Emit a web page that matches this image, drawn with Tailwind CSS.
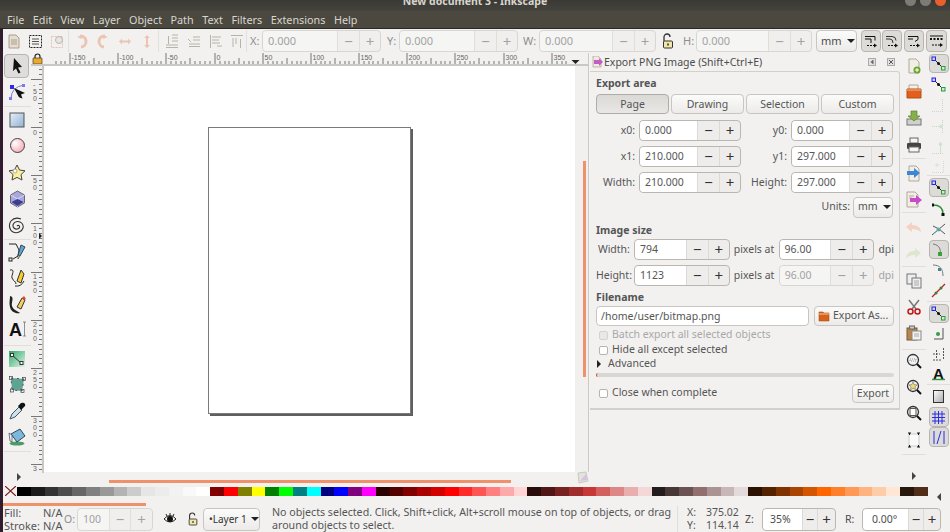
<!DOCTYPE html>
<html>
<head>
<meta charset="utf-8">
<script src="https://cdn.jsdelivr.net/npm/@tailwindcss/browser@4"></script>
<title>New document 3 - Inkscape</title>
</head>
<body class="w-[950px] h-[532px] overflow-hidden flex flex-col bg-[#f2f1f0] font-['Noto_Sans',sans-serif] text-[10.5px] text-[#4c4c4c]">

<!-- title -->
<div class="h-[11px] shrink-0 overflow-hidden bg-gradient-to-b from-[#3a3935] to-[#45433d] relative flex justify-center items-start">
  <span class="text-[#d8d5cd] font-bold text-[10.5px] leading-[14px] -mt-[6px]">New document 3 - Inkscape</span>
  <div class="absolute right-[4px] -top-[5px] flex gap-[4px]">
    <div class="w-[11px] h-[11px] rounded-full bg-[#7e7b74]"></div>
    <div class="w-[11px] h-[11px] rounded-full bg-[#7e7b74]"></div>
    <div class="w-[11px] h-[11px] rounded-full bg-[#e9602c]"></div>
  </div>
</div>
<!-- menu -->
<div class="h-[18px] shrink-0 bg-[#4b4840] border-b border-[#2a2823] flex items-center pl-[7px] gap-[8.5px] text-[#d9d6ce] text-[10.8px] leading-none pt-[2px]">
  <span>File</span><span>Edit</span><span>View</span><span>Layer</span><span>Object</span><span>Path</span><span>Text</span><span>Filters</span><span>Extensions</span><span>Help</span>
</div>

<div class="flex flex-1 min-h-0">
  <div class="w-[3px] bg-[#2f1c2c] shrink-0"></div>
  <div class="flex-1 flex flex-col min-w-0">

    <!-- commands toolbar -->
    <div class="h-[24px] shrink-0 flex items-center">
      <div class="flex items-center w-[243px] shrink-0">
        <svg class="ml-[4px]" width="14" height="15" viewBox="0 0 14 15"><path d="M2 1h7l3 3v10H2z" fill="#e6ddcf" stroke="#a89f90"/><path d="M4 6h6M4 8h6M4 10h6" stroke="#a89f90"/></svg>
        <svg class="ml-[7px]" width="15" height="15" viewBox="0 0 15 15"><rect x="1.500" y="1.500" width="12" height="12" fill="none" stroke="#222" stroke-dasharray="2 1"/><path d="M4 5h7M4 7.500h7M4 10h7" stroke="#555"/></svg>
        <svg class="ml-[7px]" width="15" height="15" viewBox="0 0 15 15"><rect x="1.500" y="2.500" width="11" height="11" fill="none" stroke="#e3c2b4" stroke-dasharray="2 1"/><circle cx="9" cy="6" r="3.500" fill="#e8e6e2" stroke="#b9b6b0"/></svg>
        <div class="w-px h-[22px] bg-[#e2e0dc] ml-[3px]"></div>
        <svg class="ml-[6px]" width="14" height="15" viewBox="0 0 14 15"><path d="M5 2a5.500 5.500 0 1 1 1 11" fill="none" stroke="#ecc5b2" stroke-width="3"/><path d="M2 3l5-2v4z" fill="#ecc5b2"/></svg>
        <svg class="ml-[7px]" width="14" height="15" viewBox="0 0 14 15"><path d="M9 2a5.500 5.500 0 1 0-1 11" fill="none" stroke="#ecc5b2" stroke-width="3"/><path d="M12 3L7 1v4z" fill="#ecc5b2"/></svg>
        <svg class="ml-[8px]" width="14" height="15" viewBox="0 0 14 15"><path d="M1 7.500l3-3v2h6v-2l3 3-3 3v-2H4v2z" fill="#ecc5b2"/></svg>
        <svg class="ml-[8px]" width="14" height="15" viewBox="0 0 14 15"><path d="M7 1l3 3H8v7h2l-3 3-3-3h2V4H4z" fill="#ecc5b2"/></svg>
        <div class="w-px h-[22px] bg-[#e2e0dc] ml-[4px]"></div>
        <svg class="ml-[6px]" width="14" height="15" viewBox="0 0 14 15"><path d="M1 13.500h12M1 11h12M7 1h6M7 4h6M7 7h6M3.500 2v8" stroke="#b7b3a8" fill="none"/></svg>
        <svg class="ml-[8px]" width="14" height="15" viewBox="0 0 14 15"><path d="M2 12.500h11M2 10h11M6 3h7M6 6h7M1 5l3 3" stroke="#b7b3a8" fill="none"/></svg>
        <svg class="ml-[8px]" width="14" height="15" viewBox="0 0 14 15"><path d="M1.500 1v13M3 3h9M3 6h7M3 9h8M8 12h5" stroke="#b7b3a8" fill="none"/></svg>
        <svg class="ml-[7px]" width="14" height="15" viewBox="0 0 14 15"><path d="M1 1.500h12M3 4v9M6 4v6M10.500 5v9" stroke="#b7b3a8" fill="none"/></svg>
      </div>
      <div class="w-px h-[22px] bg-[#e2e0dc]"></div>
      <span class="ml-[3px] w-[12px] text-[#8e8e8e] text-[11px]">X:</span>
      <div class="flex h-[22px] w-[119px] rounded-[4px] border border-[#d8d6d2] bg-[#f0efee] text-[#a3a3a3] text-[11px] leading-[20px]">
        <div class="flex-1 pl-[5px] bg-[#f5f5f4] rounded-l-[4px]">0.000</div>
        <div class="w-[22px] border-l border-[#e0dedb] text-center text-[15px]">−</div>
        <div class="w-[21px] border-l border-[#e0dedb] text-center text-[15px]">+</div>
      </div>
      <span class="ml-[6px] w-[12px] text-[#8e8e8e] text-[11px]">Y:</span>
      <div class="flex h-[22px] w-[119px] rounded-[4px] border border-[#d8d6d2] bg-[#f0efee] text-[#a3a3a3] text-[11px] leading-[20px]">
        <div class="flex-1 pl-[5px] bg-[#f5f5f4] rounded-l-[4px]">0.000</div>
        <div class="w-[22px] border-l border-[#e0dedb] text-center text-[15px]">−</div>
        <div class="w-[21px] border-l border-[#e0dedb] text-center text-[15px]">+</div>
      </div>
      <span class="ml-[5px] w-[16px] text-[#8e8e8e] text-[11px]">W:</span>
      <div class="flex h-[22px] w-[117px] rounded-[4px] border border-[#d8d6d2] bg-[#f0efee] text-[#a3a3a3] text-[11px] leading-[20px]">
        <div class="flex-1 pl-[5px] bg-[#f5f5f4] rounded-l-[4px]">0.000</div>
        <div class="w-[22px] border-l border-[#e0dedb] text-center text-[15px]">−</div>
        <div class="w-[21px] border-l border-[#e0dedb] text-center text-[15px]">+</div>
      </div>
      <svg class="ml-[5px]" width="14" height="16" viewBox="0 0 14 16"><path d="M3 8V4a3 3 0 0 1 6 0" fill="none" stroke="#333" stroke-width="1.300"/><rect x="2.500" y="8" width="9" height="7" rx="1" fill="#f3e7a8" stroke="#333"/><rect x="6" y="10.500" width="2" height="2" fill="#555"/></svg>
      <span class="ml-[8px] w-[13px] text-[#8e8e8e] text-[11px]">H:</span>
      <div class="flex h-[22px] w-[116px] rounded-[4px] border border-[#d8d6d2] bg-[#f0efee] text-[#a3a3a3] text-[11px] leading-[20px]">
        <div class="flex-1 pl-[5px] bg-[#f5f5f4] rounded-l-[4px]">0.000</div>
        <div class="w-[22px] border-l border-[#e0dedb] text-center text-[15px]">−</div>
        <div class="w-[21px] border-l border-[#e0dedb] text-center text-[15px]">+</div>
      </div>
      <div class="ml-[4px] h-[22px] w-[41px] rounded-[4px] border border-[#c9c6c1] bg-gradient-to-b from-[#fbfbfa] to-[#ecebe9] flex items-center pl-[4px] gap-[5px] text-[11px]"><span>mm</span><span class="w-0 h-0 border-x-[4px] border-x-transparent border-t-[4px] border-t-[#222]"></span></div>
      <div class="ml-[4px] w-[20px] h-[22px] rounded-[4px] border border-[#b8b5b0] bg-[#dcdbd8] flex items-center justify-center">
        <svg width="14" height="14" viewBox="0 0 14 14"><path d="M1 2.500h10v4M1 5h6v4" fill="none" stroke="#111" stroke-width="1"/><path d="M3 11.500h8" stroke="#111" stroke-dasharray="2 1"/><path d="M10 9.500l3 2-3 2z" fill="#111"/></svg>
      </div>
      <div class="ml-[1px] w-[20px] h-[22px] rounded-[4px] border border-[#b8b5b0] bg-[#dcdbd8] flex items-center justify-center">
        <svg width="14" height="14" viewBox="0 0 14 14"><path d="M1 2.500h6q4 0 4 4M1 5h4q3 0 3 4" fill="none" stroke="#333"/><path d="M3 11.500h8" stroke="#111" stroke-dasharray="2 1"/><path d="M10 9.500l3 2-3 2z" fill="#111"/></svg>
      </div>
      <div class="ml-[2px] w-[20px] h-[22px] rounded-[4px] border border-[#b8b5b0] bg-[#dcdbd8] flex items-center justify-center">
        <svg width="14" height="14" viewBox="0 0 14 14"><path d="M1 2.500h10v3l-3 2" fill="none" stroke="#111"/><path d="M1 5h5" stroke="#111"/><path d="M3 11.500h8" stroke="#111" stroke-dasharray="2 1"/><path d="M10 9.500l3 2-3 2z" fill="#111"/></svg>
      </div>
      <div class="ml-[2px] w-[21px] h-[22px] rounded-[4px] border border-[#b8b5b0] bg-[#dcdbd8] flex items-center justify-center">
        <svg width="15" height="14" viewBox="0 0 15 14"><path d="M1 2h13" stroke="#111"/><path d="M1 5h13" stroke="#111" stroke-dasharray="2 1.500" stroke-width="2"/><path d="M3 11h8" stroke="#111" stroke-dasharray="2 1"/><path d="M11 9l3 2-3 2z" fill="#111"/></svg>
      </div>
    </div>

    <div class="flex-1 flex min-h-0">
      <!-- left + canvas + panel -->
      <div class="flex-1 flex flex-col min-w-0">
        <div class="flex flex-1 min-h-0">
          <!-- tools -->
          <div class="w-[28px] shrink-0 flex flex-col items-center relative">
            <div class="absolute left-[1px] top-[1px] w-[25px] h-[24px] rounded-[4px] border border-[#b8b5b0] bg-[#dedddb]"></div>
            <svg class="mt-[4px] relative" width="16" height="18" viewBox="0 0 16 18"><path d="M5 1l8 9-4 .5 2.500 5-2 1-2.500-5L4 14z" fill="#111"/></svg>
            <svg class="mt-[7px]" width="20" height="20" viewBox="0 0 20 20"><path d="M4 17Q4 5 17 3" fill="none" stroke="#8080c0"/><rect x="2" y="15" width="3" height="3" fill="#7a7af0"/><rect x="15" y="2" width="3" height="3" fill="#7a7af0"/><rect x="3" y="3" width="4" height="4" fill="#2a2af0"/><path d="M7 6l11 5-4 1.500 1.500 4-3-1-1-1z" fill="#111"/></svg>
            <div class="w-[27px] h-px bg-[#e0dedb] mt-[4px]"></div>
            <svg class="mt-[5px]" width="16" height="16" viewBox="0 0 16 16"><defs><linearGradient id="r1" x1="0" y1="0" x2="1" y2="1"><stop offset="0" stop-color="#e8f0f8"/><stop offset="1" stop-color="#8fb0d4"/></linearGradient></defs><rect x="1" y="1" width="14" height="14" fill="url(#r1)" stroke="#555"/></svg>
            <svg class="mt-[9px]" width="17" height="17" viewBox="0 0 17 17"><defs><radialGradient id="c1" cx=".35" cy=".35" r=".8"><stop offset="0" stop-color="#fff"/><stop offset="1" stop-color="#f5a0aa"/></radialGradient></defs><circle cx="8.500" cy="8.500" r="7" fill="url(#c1)" stroke="#444"/></svg>
            <svg class="mt-[10px]" width="18" height="17" viewBox="0 0 18 17"><path d="M9 1l2.500 5 5.500.8-4 3.800 1 5.400-5-2.600L4 16l1-5.400L1 6.800l5.500-.8z" fill="#fbf0a0" stroke="#444"/><circle cx="7" cy="7" r="2" fill="#fff" stroke="#777" stroke-width=".6"/></svg>
            <svg class="mt-[9px]" width="17" height="18" viewBox="0 0 17 18"><path d="M8.500 1L15.500 5v8l-7 4-7-4V5z" fill="#a8a8dc" stroke="#667"/><path d="M1.500 5l7 4 7-4M8.500 9v8" fill="none" stroke="#dcdcf4"/><path d="M2.500 12l6-3 6 3-6 4z" fill="#3c3c90"/></svg>
            <svg class="mt-[9px]" width="18" height="18" viewBox="0 0 18 18"><path d="M9 9c1.500-1.500 3 0 2.500 1.500S8 13 6 11s-1-6 3-6.500 7 3 6 6.500-6 6-10 4S.5 7 3 4 9 .5 13 2" fill="none" stroke="#333" stroke-width="1.100"/></svg>
            <div class="w-[27px] h-px bg-[#e0dedb] mt-[4px]"></div>
            <svg class="mt-[3px]" width="19" height="19" viewBox="0 0 19 19"><path d="M1 1h7l3 6-1 6-5 3" fill="none" stroke="#222"/><rect x="1" y="15" width="3" height="3" fill="none" stroke="#222"/><path d="M10 12l3-10 4 2-5 9z" fill="#5ea6d6" stroke="#345"/><path d="M10 12l2 1-2 3z" fill="#ece29a" stroke="#333" stroke-width=".6"/></svg>
            <svg class="mt-[6px]" width="19" height="20" viewBox="0 0 19 20"><path d="M2 2c6-1 1 5 2 8s4 3 4 6" fill="none" stroke="#222"/><path d="M9 13l4-11 3 4-3 9z" fill="#f8cc2e" stroke="#333"/><path d="M7 18q6 1 9-5" fill="none" stroke="#222"/></svg>
            <svg class="mt-[7px]" width="19" height="20" viewBox="0 0 19 20"><path d="M2 1c5 1 1 6 2 10s6 5 8 7c-4 1-9-1-10-6S2 5 2 1z" fill="#222"/><path d="M9 12l5-9 3 2-4 9z" fill="#f0d060" stroke="#333"/><path d="M14 3l2-2 2 3-2 1z" fill="#d43"/></svg>
            <svg class="mt-[6px]" width="19" height="18" viewBox="0 0 19 18"><text x="1" y="15" font-family="Liberation Sans" font-weight="700" font-size="18" fill="#111">A</text><path d="M15 1h3M16.500 1v14M15 15h3" stroke="#777" fill="none" stroke-width=".8"/></svg>
            <div class="w-[27px] h-px bg-[#e0dedb] mt-[6px]"></div>
            <svg class="mt-[5px]" width="16" height="16" viewBox="0 0 16 16"><defs><linearGradient id="g1" x1="0" y1="0" x2="1" y2="1"><stop offset="0" stop-color="#2ea86a"/><stop offset="1" stop-color="#e0f4e6"/></linearGradient></defs><rect width="16" height="16" fill="url(#g1)"/><path d="M3 4l9 8" stroke="#333"/><rect x="1.500" y="2.500" width="3" height="3" fill="#fff" stroke="#333"/><rect x="11" y="10.500" width="3" height="3" fill="#fff" stroke="#333"/></svg>
            <svg class="mt-[9px]" width="17" height="17" viewBox="0 0 17 17"><path d="M2 2l13 1-2 12-10-1z" fill="#5fa393"/><path d="M2 2l13 1-2 12-10-1z" fill="none" stroke="#556" stroke-dasharray="2 4"/><rect x="0.500" y="0.500" width="3" height="3" fill="none" stroke="#444" stroke-width=".7"/><rect x="13.500" y="1.500" width="3" height="3" fill="none" stroke="#444" stroke-width=".7"/><rect x="12" y="13.500" width="3" height="3" fill="none" stroke="#444" stroke-width=".7"/><rect x="1.500" y="13" width="3" height="3" fill="none" stroke="#444" stroke-width=".7"/></svg>
            <svg class="mt-[9px]" width="17" height="18" viewBox="0 0 17 18"><path d="M1 17l2-5 7-7 3 3-7 7z" fill="#cfe0ea" stroke="#456"/><path d="M9 4l3-3q3-1 4 1t-1 3l-3 3z" fill="#111"/></svg>
            <svg class="mt-[8px]" width="18" height="18" viewBox="0 0 18 18"><ellipse cx="9" cy="15.500" rx="7.500" ry="2" fill="#4a9a6a"/><path d="M3 6l9-5 5 7-8 6z" fill="#7ab8dc" stroke="#345"/><path d="M1 5l3 2 0 7-2-1z" fill="#f3f3f3" stroke="#345" stroke-width=".7"/></svg>
            <div class="w-[27px] h-px bg-[#e0dedb] mt-[5px]"></div>
          </div>
          <!-- ruler + canvas -->
          <div class="flex-1 flex flex-col min-w-0">
            <div class="h-[13px] shrink-0 flex bg-[#f2f1f0] border-b-[2px] border-[#c9c8c5]">
              <div class="w-[13px] shrink-0 flex items-start pl-[1px]">
                <svg width="11" height="11" viewBox="0 0 11 11"><path d="M3 5V3.500a2.500 2.500 0 0 1 5 0V5" fill="none" stroke="#222" stroke-width="1.200"/><rect x="1" y="5" width="9" height="6" rx=".5" fill="#e8aa2a" stroke="#222" stroke-width=".6"/></svg>
              </div>
              <svg class="flex-1" width="531" height="11" viewBox="44 0 531 11" font-family="Liberation Sans" font-size="7" fill="#666">
                <g stroke="#777" stroke-width="1" fill="none">
                  <path d="M63.500 0v11M111.500 0v11M159.500 0v11M208.500 0v11M256.500 0v11M304.500 0v11M352.500 0v11M400.500 0v11M448.500 0v11M497.500 0v11M545.500 0v11"/>
                  <path d="M87.500 5v6M135.500 5v6M183.500 5v6M232.500 5v6M280.500 5v6M328.500 5v6M376.500 5v6M424.500 5v6M472.500 5v6M521.500 5v6"/>
                  <path d="M49.500 8v3M54.500 8v3M58.500 8v3M68.500 8v3M73.500 8v3M78.500 8v3M82.500 8v3M92.500 8v3M97.500 8v3M102.500 8v3M106.500 8v3M116.500 8v3M121.500 8v3M126.500 8v3M130.500 8v3M140.500 8v3M145.500 8v3M150.500 8v3M154.500 8v3M164.500 8v3M169.500 8v3M174.500 8v3M178.500 8v3M188.500 8v3M193.500 8v3M198.500 8v3M203.500 8v3M213.500 8v3M218.500 8v3M222.500 8v3M227.500 8v3M237.500 8v3M242.500 8v3M246.500 8v3M251.500 8v3M261.500 8v3M266.500 8v3M270.500 8v3M275.500 8v3M285.500 8v3M290.500 8v3M294.500 8v3M299.500 8v3M309.500 8v3M314.500 8v3M318.500 8v3M323.500 8v3M333.500 8v3M338.500 8v3M342.500 8v3M347.500 8v3M357.500 8v3M362.500 8v3M366.500 8v3M371.500 8v3M381.500 8v3M386.500 8v3M390.500 8v3M395.500 8v3M405.500 8v3M410.500 8v3M414.500 8v3M419.500 8v3M429.500 8v3M434.500 8v3M438.500 8v3M443.500 8v3M453.500 8v3M458.500 8v3M463.500 8v3M467.500 8v3M477.500 8v3M482.500 8v3M487.500 8v3M492.500 8v3M502.500 8v3M507.500 8v3M511.500 8v3M516.500 8v3M526.500 8v3M531.500 8v3M535.500 8v3M540.500 8v3M550.500 8v3M555.500 8v3M559.500 8v3"/>
                </g>
                <text x="65" y="7">-150</text><text x="113" y="7">-100</text><text x="161" y="7">-50</text><text x="210" y="7">0</text><text x="258" y="7">50</text><text x="306" y="7">100</text><text x="354" y="7">150</text><text x="402" y="7">200</text><text x="450" y="7">250</text><text x="499" y="7">300</text><text x="547" y="7">350</text>
                <path d="M565 7l4 4 4-4z" fill="#222"/>
              </svg>
            </div>
            <div class="flex-1 flex min-h-0">
              <svg class="shrink-0 bg-[#f2f1f0] border-r-[2px] border-[#c9c8c5]" width="13" height="407" viewBox="0 66 11 407" preserveAspectRatio="none" font-family="Liberation Sans" font-size="7" fill="#666">
                <g stroke="#777" fill="none">
                  <path d="M0 79.500h11M0 127.500h11M0 175.500h11M0 223.500h11M0 272.500h11M0 320.500h11M0 368.500h11M0 416.500h11M0 464.500h11"/>
                  <path d="M7 103.500h4M7 151.500h4M7 199.500h4M7 247.500h4M7 296.500h4M7 344.500h4M7 392.500h4M7 440.500h4"/>
                  <path d="M8 69.500h3M8 74.500h3M8 84.500h3M8 89.500h3M8 93.500h3M8 98.500h3M8 108.500h3M8 113.500h3M8 117.500h3M8 122.500h3M8 132.500h3M8 137.500h3M8 142.500h3M8 146.500h3M8 156.500h3M8 161.500h3M8 166.500h3M8 170.500h3M8 180.500h3M8 185.500h3M8 190.500h3M8 194.500h3M8 204.500h3M8 209.500h3M8 214.500h3M8 218.500h3M8 228.500h3M8 233.500h3M8 238.500h3M8 242.500h3M8 252.500h3M8 257.500h3M8 262.500h3M8 267.500h3M8 277.500h3M8 282.500h3M8 286.500h3M8 291.500h3M8 301.500h3M8 306.500h3M8 310.500h3M8 315.500h3M8 325.500h3M8 330.500h3M8 334.500h3M8 339.500h3M8 349.500h3M8 354.500h3M8 358.500h3M8 363.500h3M8 373.500h3M8 378.500h3M8 382.500h3M8 387.500h3M8 397.500h3M8 402.500h3M8 406.500h3M8 411.500h3M8 421.500h3M8 426.500h3M8 430.500h3M8 435.500h3M8 445.500h3M8 450.500h3M8 454.500h3M8 459.500h3M8 469.500h3"/>
                </g>
                <text x="2" y="87">-</text><text x="2" y="94">5</text><text x="2" y="101">0</text>
                <text x="2" y="135">0</text>
                <text x="2" y="183">5</text><text x="2" y="190">0</text>
                <text x="2" y="231">1</text><text x="2" y="238">0</text><text x="2" y="245">0</text>
                <text x="2" y="279">1</text><text x="2" y="286">5</text><text x="2" y="293">0</text>
                <text x="2" y="327">2</text><text x="2" y="334">0</text><text x="2" y="341">0</text>
                <text x="2" y="375">2</text><text x="2" y="382">5</text><text x="2" y="389">0</text>
                <text x="2" y="423">3</text><text x="2" y="430">0</text><text x="2" y="437">0</text>
                <text x="2" y="471">3</text>
                <path d="M8 233l3 3-3 3z" fill="#222"/>
              </svg>
              <div class="flex-1 relative bg-white">
                <div class="absolute left-[164px] top-[61px] w-[203px] h-[287px] border border-[#7a7a7a] bg-white shadow-[2px_2px_0_#5f5f5f]"></div>
              </div>
              <div class="w-[13px] shrink-0 bg-[#f1f0ee] relative">
                <div class="absolute left-[8px] top-[95px] w-[3px] h-[216px] bg-[#ef926c]"></div>
              </div>
            </div>
          </div>
          <div class="w-px bg-[#c9c8c5]"></div>
          <div class="w-px bg-[#f6f5f4]"></div>

          <!-- export panel -->
          <div class="w-[310px] shrink-0 flex flex-col">
            <div class="h-[18px] shrink-0 flex items-center pl-[2px] pr-[5px]">
              <svg width="11" height="12" viewBox="0 0 11 12"><path d="M1 0h5l3 3v8H1z" fill="#efe8dc" stroke="#a79f90" stroke-width=".7"/><path d="M2 4h5v-2l4 4-4 4V8H2z" fill="#c45cc8"/></svg>
              <span class="ml-[1px] leading-none whitespace-nowrap">Export PNG Image (Shift+Ctrl+E)</span>
              <svg class="ml-auto" width="8" height="8" viewBox="0 0 8 8"><rect x=".5" y=".5" width="7" height="7" fill="#e4e3e0" stroke="#aaa"/><path d="M5.500 1.500v5l-3-2.500z" fill="#666"/></svg>
              <svg class="ml-[11px]" width="8" height="8" viewBox="0 0 8 8"><rect x=".5" y=".5" width="7" height="7" fill="#e4e3e0" stroke="#aaa"/><path d="M2 2l4 4M6 2L2 6" stroke="#555"/></svg>
            </div>
            <div class="h-[339px] w-[310px] shrink-0 border-r border-b-2 border-t border-[#d2d0cc] rounded-tr-[3px] pl-[6px] pr-[5px] text-[#555]">
              <div class="font-bold leading-[14px] pt-[4px] h-[22px]">Export area</div>
              <div class="flex gap-[2px] h-[20px]">
                <div class="w-[73px] rounded-[4px] border border-[#b0ada8] bg-gradient-to-b from-[#dad9d6] to-[#e8e7e5] text-center leading-[18px]">Page</div>
                <div class="w-[73px] rounded-[4px] border border-[#c9c6c1] bg-gradient-to-b from-[#fbfbfa] to-[#ecebe9] text-center leading-[18px]">Drawing</div>
                <div class="w-[73px] rounded-[4px] border border-[#c9c6c1] bg-gradient-to-b from-[#fbfbfa] to-[#ecebe9] text-center leading-[18px]">Selection</div>
                <div class="w-[73px] rounded-[4px] border border-[#c9c6c1] bg-gradient-to-b from-[#fbfbfa] to-[#ecebe9] text-center leading-[18px]">Custom</div>
              </div>

              <div class="grid grid-cols-[39px_102px_42px_102px] gap-x-[4px] gap-y-[5px] mt-[6px] items-center">
                <span class="text-right">x0:</span>
                <div class="flex h-[21px] rounded-[4px] border border-[#bab7b1] bg-[#eeedeb] leading-[19px]"><div class="flex-1 pl-[5px] bg-white rounded-l-[4px]">0.000</div><div class="w-[22px] border-l border-[#dcdad7] text-center text-[15px] text-[#333]">−</div><div class="w-[21px] border-l border-[#dcdad7] text-center text-[15px] text-[#333]">+</div></div>
                <span class="text-right">y0:</span>
                <div class="flex h-[21px] rounded-[4px] border border-[#bab7b1] bg-[#eeedeb] leading-[19px]"><div class="flex-1 pl-[5px] bg-white rounded-l-[4px]">0.000</div><div class="w-[22px] border-l border-[#dcdad7] text-center text-[15px] text-[#333]">−</div><div class="w-[21px] border-l border-[#dcdad7] text-center text-[15px] text-[#333]">+</div></div>
                <span class="text-right">x1:</span>
                <div class="flex h-[21px] rounded-[4px] border border-[#bab7b1] bg-[#eeedeb] leading-[19px]"><div class="flex-1 pl-[5px] bg-white rounded-l-[4px]">210.000</div><div class="w-[22px] border-l border-[#dcdad7] text-center text-[15px] text-[#333]">−</div><div class="w-[21px] border-l border-[#dcdad7] text-center text-[15px] text-[#333]">+</div></div>
                <span class="text-right">y1:</span>
                <div class="flex h-[21px] rounded-[4px] border border-[#bab7b1] bg-[#eeedeb] leading-[19px]"><div class="flex-1 pl-[5px] bg-white rounded-l-[4px]">297.000</div><div class="w-[22px] border-l border-[#dcdad7] text-center text-[15px] text-[#333]">−</div><div class="w-[21px] border-l border-[#dcdad7] text-center text-[15px] text-[#333]">+</div></div>
                <span class="text-right">Width:</span>
                <div class="flex h-[21px] rounded-[4px] border border-[#bab7b1] bg-[#eeedeb] leading-[19px]"><div class="flex-1 pl-[5px] bg-white rounded-l-[4px]">210.000</div><div class="w-[22px] border-l border-[#dcdad7] text-center text-[15px] text-[#333]">−</div><div class="w-[21px] border-l border-[#dcdad7] text-center text-[15px] text-[#333]">+</div></div>
                <span class="text-right">Height:</span>
                <div class="flex h-[21px] rounded-[4px] border border-[#bab7b1] bg-[#eeedeb] leading-[19px]"><div class="flex-1 pl-[5px] bg-white rounded-l-[4px]">297.000</div><div class="w-[22px] border-l border-[#dcdad7] text-center text-[15px] text-[#333]">−</div><div class="w-[21px] border-l border-[#dcdad7] text-center text-[15px] text-[#333]">+</div></div>
              </div>

              <div class="flex items-center justify-end gap-[3px] mt-[3px] h-[22px] pr-[1px]">
                <span>Units:</span>
                <div class="h-[21px] w-[40px] rounded-[4px] border border-[#c9c6c1] bg-gradient-to-b from-[#fbfbfa] to-[#ecebe9] flex items-center pl-[4px] gap-[5px]"><span>mm</span><span class="w-0 h-0 border-x-[4px] border-x-transparent border-t-[4px] border-t-[#222]"></span></div>
              </div>

              <div class="font-bold leading-[14px] mt-[5px] h-[14px]">Image size</div>
              <div class="flex items-center h-[21px] mt-[2px]">
                <span class="w-[34px] text-right">Width:</span>
                <div class="ml-[4px] flex h-[21px] w-[96px] rounded-[4px] border border-[#bab7b1] bg-[#eeedeb] leading-[19px]"><div class="flex-1 pl-[5px] bg-white rounded-l-[4px]">794</div><div class="w-[22px] border-l border-[#dcdad7] text-center text-[15px] text-[#333]">−</div><div class="w-[21px] border-l border-[#dcdad7] text-center text-[15px] text-[#333]">+</div></div>
                <span class="ml-[4px] w-[42px] whitespace-nowrap">pixels at</span>
                <div class="ml-[3px] flex h-[21px] w-[96px] rounded-[4px] border border-[#bab7b1] bg-[#eeedeb] leading-[19px]"><div class="flex-1 pl-[5px] bg-white rounded-l-[4px]">96.00</div><div class="w-[22px] border-l border-[#dcdad7] text-center text-[15px] text-[#333]">−</div><div class="w-[21px] border-l border-[#dcdad7] text-center text-[15px] text-[#333]">+</div></div>
                <span class="ml-[4px]">dpi</span>
              </div>
              <div class="flex items-center h-[21px] mt-[5px]">
                <span class="w-[34px] text-right">Height:</span>
                <div class="ml-[4px] flex h-[21px] w-[96px] rounded-[4px] border border-[#bab7b1] bg-[#eeedeb] leading-[19px]"><div class="flex-1 pl-[5px] bg-white rounded-l-[4px]">1123</div><div class="w-[22px] border-l border-[#dcdad7] text-center text-[15px] text-[#333]">−</div><div class="w-[21px] border-l border-[#dcdad7] text-center text-[15px] text-[#333]">+</div></div>
                <span class="ml-[4px] w-[42px] whitespace-nowrap">pixels at</span>
                <div class="ml-[3px] flex h-[21px] w-[96px] rounded-[4px] border border-[#d8d6d2] bg-[#f0efee] text-[#a3a3a3] leading-[19px]"><div class="flex-1 pl-[5px] bg-[#f5f5f4] rounded-l-[4px]">96.00</div><div class="w-[22px] border-l border-[#e0dedb] text-center text-[15px]">−</div><div class="w-[21px] border-l border-[#e0dedb] text-center text-[15px]">+</div></div>
                <span class="ml-[4px] text-[#a3a3a3]">dpi</span>
              </div>

              <div class="font-bold leading-[14px] mt-[4px] h-[14px]">Filename</div>
              <div class="flex items-center h-[20px] mt-[2px]">
                <div class="w-[213px] h-[20px] rounded-[4px] border border-[#c9c6c1] bg-white pl-[4px] leading-[18px]">/home/user/bitmap.png</div>
                <div class="ml-[5px] w-[80px] h-[20px] rounded-[4px] border border-[#c9c6c1] bg-gradient-to-b from-[#fbfbfa] to-[#ecebe9] flex items-center pl-[3px] gap-[3px] whitespace-nowrap">
                  <svg width="12" height="11" viewBox="0 0 12 11"><path d="M1 1h4l1 1h5v8H1z" fill="#d8621c" stroke="#a9511c" stroke-width=".6"/><path d="M1 3h10" stroke="#f0c9a0"/></svg>
                  <span>Export As...</span>
                </div>
              </div>
              <div class="flex items-center h-[14px] mt-[2px] text-[#a8a8a8]">
                <span class="w-[9px] h-[9px] rounded-[2px] border border-[#d5d3cf] bg-[#e9e8e6] ml-[3px]"></span><span class="ml-[4px]">Batch export all selected objects</span>
              </div>
              <div class="flex items-center h-[14px] mt-[1px]">
                <span class="w-[9px] h-[9px] rounded-[2px] border border-[#b7b4af] bg-white ml-[3px]"></span><span class="ml-[4px]">Hide all except selected</span>
              </div>
              <div class="flex items-center h-[14px]">
                <span class="w-0 h-0 border-y-[4px] border-y-transparent border-l-[4px] border-l-[#222] ml-[1px]"></span><span class="ml-[7px]">Advanced</span>
              </div>
              <div class="h-[4px] w-[298px] rounded-[2px] bg-[#d9d7d4] border-l-[1px] border-[#e0401a] mt-[2px]"></div>
              <div class="flex items-center h-[20px] mt-[6px]">
                <span class="w-[9px] h-[9px] rounded-[2px] border border-[#b7b4af] bg-white ml-[3px]"></span><span class="ml-[4px]">Close when complete</span>
                <div class="ml-auto w-[42px] h-[19px] rounded-[4px] border border-[#c9c6c1] bg-gradient-to-b from-[#fbfbfa] to-[#ecebe9] text-center leading-[17px]">Export</div>
              </div>
            </div>
          </div>
        </div>
        <!-- horizontal scroll -->
        <div class="h-[13px] shrink-0 relative">
          <svg class="absolute left-[13px] top-[1px]" width="6" height="8" viewBox="0 0 6 8"><path d="M1 0l4 4-4 4z" fill="#444"/></svg>
          <div class="absolute left-[106px] top-[8px] w-[402px] h-[3px] bg-[#ef926c]"></div>
          <svg class="absolute left-[573px] -top-[1px]" width="13" height="13" viewBox="0 0 13 13"><path d="M2 2l8-1 2 9-9 2z" fill="#dfe6d8" stroke="#c9c8c5"/><path d="M4 10l6-7 1 6z" fill="#d8c0e0"/></svg>
        </div>
      </div>

      <!-- right toolbars -->
      <div class="w-[25px] shrink-0 flex flex-col items-center ml-[1px]">
        <svg class="mt-[5px]" width="16" height="16" viewBox="0 0 16 16"><path d="M3 1h7l3 3v11H3z" fill="#f2eee6" stroke="#b0a898"/><circle cx="11" cy="12" r="3.500" fill="#6aa62a"/><path d="M11 10v4M9 12h4" stroke="#fff"/></svg>
        <svg class="mt-[10px]" width="16" height="16" viewBox="0 0 16 16"><path d="M3 1h9v5H3z" fill="#f4f0e8" stroke="#b0a898"/><path d="M1 5h14v9H1z" fill="#e2601c" stroke="#b24e18"/><path d="M1 6h14" stroke="#f2b890"/></svg>
        <svg class="mt-[10px]" width="16" height="16" viewBox="0 0 16 16"><rect x="1" y="9" width="14" height="6" fill="#d2d0cc" stroke="#777"/><path d="M5 1h6v5h3l-6 5-6-5h3z" fill="#86b04a" stroke="#5e8030" stroke-width=".7"/></svg>
        <svg class="mt-[11px]" width="16" height="16" viewBox="0 0 16 16"><rect x="4" y="1" width="8" height="5" fill="#f5f5f5" stroke="#666"/><rect x="1" y="6" width="14" height="6" rx="1" fill="#444"/><rect x="3" y="10" width="10" height="5" fill="#f5f5f5" stroke="#666"/></svg>
        <div class="w-[24px] h-px bg-[#e0dedb] mt-[5px]"></div>
        <svg class="mt-[6px]" width="16" height="17" viewBox="0 0 16 17"><path d="M3 1h7l3 3v12H3z" fill="#f2eee6" stroke="#b0a898"/><path d="M1 6h7V3l6 5-6 5v-3H1z" fill="#3e86d6"/></svg>
        <svg class="mt-[9px]" width="16" height="17" viewBox="0 0 16 17"><path d="M1 1h8l3 3v12H1z" fill="#f2eee6" stroke="#b0a898"/><path d="M3 5h5M3 7h3" stroke="#b0a898"/><path d="M4 7h6V4l6 5-6 5v-3H4z" fill="#c84cc8"/></svg>
        <div class="w-[24px] h-px bg-[#e0dedb] mt-[4px]"></div>
        <svg class="mt-[7px]" width="17" height="15" viewBox="0 0 17 15"><path d="M1 7l6-5v3c5 0 9 2 9 8-2-3-5-4-9-4v3z" fill="#f3d2c2"/></svg>
        <svg class="mt-[11px]" width="17" height="15" viewBox="0 0 17 15"><path d="M16 7l-6-5v3C5 5 1 7 1 13c2-3 5-4 9-4v3z" fill="#dfe6cf"/></svg>
        <div class="w-[24px] h-px bg-[#e0dedb] mt-[5px]"></div>
        <svg class="mt-[6px]" width="16" height="16" viewBox="0 0 16 16"><rect x="1" y="1" width="9" height="10" fill="#eee" stroke="#777"/><rect x="6" y="5" width="9" height="10" fill="#eee" stroke="#777"/><path d="M8 8h5M8 10h5M8 12h5" stroke="#aaa"/></svg>
        <svg class="mt-[10px]" width="16" height="16" viewBox="0 0 16 16"><path d="M3 1l7 9M13 1L6 10" stroke="#777" stroke-width="1.500"/><circle cx="4.500" cy="12.500" r="2.500" fill="none" stroke="#c01818" stroke-width="1.500"/><circle cx="11.500" cy="12.500" r="2.500" fill="none" stroke="#c01818" stroke-width="1.500"/></svg>
        <svg class="mt-[10px]" width="16" height="16" viewBox="0 0 16 16"><rect x="1" y="3" width="10" height="12" fill="#b8854c" stroke="#7a5a30"/><rect x="3.500" y="1" width="5" height="3" fill="#ccc" stroke="#666"/><rect x="6" y="6" width="9" height="9" fill="#f2f2f2" stroke="#888"/><path d="M8 9h5M8 11h5" stroke="#aaa"/></svg>
        <div class="w-[24px] h-px bg-[#e0dedb] mt-[8px]"></div>
        <svg class="mt-[3px]" width="16" height="16" viewBox="0 0 16 16"><circle cx="7" cy="7" r="5.500" fill="#eef2f4" stroke="#333" stroke-width="1.300"/><path d="M11 11l4 4" stroke="#111" stroke-width="2"/><path d="M4 6h6v2H4z" fill="none" stroke="#999" stroke-dasharray="1 1"/></svg>
        <svg class="mt-[10px]" width="16" height="16" viewBox="0 0 16 16"><circle cx="7" cy="7" r="5.500" fill="#eef2f4" stroke="#333" stroke-width="1.300"/><path d="M11 11l4 4" stroke="#111" stroke-width="2"/><path d="M7 3l1.200 2.500 2.800.4-2 2 .5 2.700L7 9.400 4.500 10.600 5 8 3 6l2.800-.5z" fill="#f0d870" stroke="#555" stroke-width=".5"/></svg>
        <svg class="mt-[10px]" width="16" height="16" viewBox="0 0 16 16"><circle cx="7" cy="7" r="5.500" fill="#eef2f4" stroke="#333" stroke-width="1.300"/><path d="M11 11l4 4" stroke="#111" stroke-width="2"/><rect x="4" y="3.500" width="6" height="7" fill="#fff" stroke="#555"/></svg>
        <svg class="mt-[11px]" width="16" height="16" viewBox="0 0 16 16"><rect x="3" y="2" width="10" height="12" fill="#fafafa" stroke="#ccc"/><path d="M2 1h3M11 1h3M2 15h3M11 15h3M3.500 1v2M12.500 1v2M3.500 13v2M12.500 13v2" stroke="#111"/></svg>
        <div class="w-[24px] h-px bg-[#e0dedb] mt-[6px]"></div>
        <svg class="mt-[17px]" width="6" height="8" viewBox="0 0 6 8"><path d="M1 0l4 4-4 4z" fill="#444"/></svg>
      </div>
      <div class="w-[25px] shrink-0 flex flex-col items-center mr-[-1px]">
        <div class="h-[21px] w-full flex items-center justify-center"><div class="w-[20px] h-[19px] rounded-[4px] border border-[#b8b5b0] bg-[#dcdbd8] flex items-center justify-center"><svg width="15" height="15" viewBox="0 0 15 15"><path d="M3 3l9 9" stroke="#222"/><circle cx="7.500" cy="7.500" r="1.500" fill="#111"/><rect x="1" y="1" width="3.500" height="3.500" fill="#cfd0f5" stroke="#2222dd"/><rect x="10.500" y="10.500" width="3.500" height="3.500" fill="#cfeccf" stroke="#2a9a3a"/></svg></div></div>
        <div class="h-[21px] w-full flex items-center justify-center"><svg width="15" height="15" viewBox="0 0 15 15"><path d="M3 3l9 9" stroke="#222"/><circle cx="7.500" cy="7.500" r="1.500" fill="#111"/><rect x="1" y="1" width="3.500" height="3.500" fill="#cfd0f5" stroke="#2222dd"/><rect x="10.500" y="10.500" width="3.500" height="3.500" fill="#cfeccf" stroke="#2a9a3a"/></svg></div>
        <div class="h-[21px] w-full flex items-center justify-center"><svg width="15" height="15" viewBox="0 0 15 15"><path d="M11.500 1v12M1 13.500h12" stroke="#c9d6c9" stroke-dasharray="1 1" fill="none"/></svg></div>
        <div class="h-[21px] w-full flex items-center justify-center"><svg width="15" height="15" viewBox="0 0 15 15"><path d="M11.500 1v13M1 7.500h12" stroke="#c9d6c9" stroke-dasharray="1 1" fill="none"/><circle cx="10" cy="7.500" r="1.800" fill="#cfe2cf"/></svg></div>
        <div class="h-[20px] w-full flex items-center justify-center"><svg width="15" height="15" viewBox="0 0 15 15"><path d="M1 13.500h12" stroke="#c9d6c9" stroke-dasharray="1 1"/><path d="M9.500 13V3M8 5l1.500-3L11 5z" stroke="#cfe2cf" fill="#cfe2cf"/></svg></div>
        <div class="h-[18px] w-full flex items-center justify-center"><svg width="15" height="15" viewBox="0 0 15 15"><path d="M1 13.500h12M12.500 2v11" stroke="#d2d8d2" stroke-dasharray="1 1" fill="none"/><circle cx="6" cy="6" r="1.800" fill="#dde4dd"/></svg></div>
        <div class="w-[24px] h-px shrink-0 bg-[#e0dedb]"></div>
        <div class="h-[23px] w-full flex items-center justify-center"><div class="w-[20px] h-[19px] rounded-[4px] border border-[#b8b5b0] bg-[#dcdbd8] flex items-center justify-center"><svg width="15" height="15" viewBox="0 0 15 15"><path d="M3 3l9 9" stroke="#222"/><circle cx="7.500" cy="7.500" r="1.500" fill="#111"/><rect x="1" y="1" width="3.500" height="3.500" fill="#cfd0f5" stroke="#2222dd"/><rect x="10.500" y="10.500" width="3.500" height="3.500" fill="#cfeccf" stroke="#2a9a3a"/></svg></div></div>
        <div class="h-[20px] w-full flex items-center justify-center"><svg width="15" height="15" viewBox="0 0 15 15"><path d="M2 3c7 0 10 3 10 9" fill="none" stroke="#2c8a3a" stroke-width="1.400"/><rect x="1" y="1.500" width="2" height="3" fill="#111"/><rect x="10.500" y="11" width="3" height="3" fill="#111"/></svg></div>
        <div class="h-[20px] w-full flex items-center justify-center"><svg width="15" height="15" viewBox="0 0 15 15"><path d="M1 13L14 2M2 4q6 2 12 8" fill="none" stroke="#555"/><circle cx="7.500" cy="7.500" r="2" fill="#5aa"/></svg></div>
        <div class="h-[21px] w-full flex items-center justify-center"><div class="w-[20px] h-[19px] rounded-[4px] border border-[#b8b5b0] bg-[#dcdbd8] flex items-center justify-center"><svg width="15" height="15" viewBox="0 0 15 15"><path d="M2 2c7 1 8 6 7 11" fill="none" stroke="#777"/><rect x="7" y="10" width="4" height="4" fill="#3aa03a"/></svg></div></div>
        <div class="h-[20px] w-full flex items-center justify-center"><svg width="15" height="15" viewBox="0 0 15 15"><path d="M2 2c7 0 10 4 10 11" fill="none" stroke="#777"/><rect x="7" y="5" width="3" height="3" fill="#3a8a9a"/></svg></div>
        <div class="h-[21px] w-full flex items-center justify-center"><svg width="15" height="15" viewBox="0 0 15 15"><path d="M1 14L14 1" stroke="#c42020" stroke-width="1.300"/><circle cx="5" cy="10" r="1.500" fill="#2a8a3a"/><circle cx="10" cy="5" r="1.500" fill="#2a8a3a"/></svg></div>
        <div class="w-[24px] h-px shrink-0 bg-[#e0dedb]"></div>
        <div class="h-[22px] w-full flex items-center justify-center"><div class="w-[20px] h-[19px] rounded-[4px] border border-[#b8b5b0] bg-[#dcdbd8] flex items-center justify-center"><svg width="15" height="15" viewBox="0 0 15 15"><path d="M3 3l9 9" stroke="#222"/><circle cx="7.500" cy="7.500" r="1.500" fill="#111"/><rect x="1" y="1" width="3.500" height="3.500" fill="#cfd0f5" stroke="#2222dd"/><rect x="10.500" y="10.500" width="3.500" height="3.500" fill="#cfeccf" stroke="#2a9a3a"/></svg></div></div>
        <div class="h-[19px] w-full flex items-center justify-center"><svg width="15" height="15" viewBox="0 0 15 15"><path d="M3 13h9V2" fill="none" stroke="#555"/><circle cx="7" cy="8" r="2" fill="#3a9a4a"/></svg></div>
        <div class="h-[20px] w-full flex items-center justify-center"><svg width="15" height="15" viewBox="0 0 15 15"><path d="M2 8h7M5.500 4v8M12.500 2v11M2 14h9" stroke="#555" stroke-dasharray="2 1" fill="none"/></svg></div>
        <div class="h-[21px] w-full flex items-center justify-center"><svg width="15" height="15" viewBox="0 0 15 15"><text x="2" y="13" font-family="Liberation Sans" font-weight="700" font-size="15" fill="#111">A</text><path d="M1 13.500h13" stroke="#2c9a3a" stroke-width="1.400"/></svg></div>
        <div class="w-[24px] h-px shrink-0 bg-[#e0dedb]"></div>
        <div class="h-[22px] w-full flex items-center justify-center"><svg width="15" height="15" viewBox="0 0 15 15"><defs><linearGradient id="p1" x1="0" y1="0" x2="1" y2="1"><stop offset="0" stop-color="#fff"/><stop offset="1" stop-color="#aaa"/></linearGradient></defs><rect x="2.500" y="1.500" width="10" height="12" fill="url(#p1)" stroke="#333"/></svg></div>
        <div class="h-[20px] w-full flex items-center justify-center"><div class="w-[20px] h-[20px] rounded-[4px] border border-[#b8b5b0] bg-[#dcdbd8] flex items-center justify-center"><svg width="15" height="15" viewBox="0 0 15 15"><path d="M1 4h13M1 7.500h13M1 11h13M4 1v13M7.500 1v13M11 1v13" stroke="#2a2ae8"/></svg></div></div>
        <div class="h-[20px] w-full flex items-center justify-center"><div class="w-[20px] h-[20px] rounded-[4px] border border-[#b8b5b0] bg-[#dcdbd8] flex items-center justify-center"><svg width="15" height="15" viewBox="0 0 15 15"><path d="M3 1v13M6 14L10 1M13 1v13" stroke="#2a2ae8" fill="none"/></svg></div></div>
      </div>
    </div>

    <!-- palette -->
    <div class="h-[12px] shrink-0 flex items-end pb-[1px]">
      <svg class="shrink-0 ml-[2px] mr-[1px]" width="11" height="10" viewBox="0 0 11 10"><path d="M0 0l11 10M11 0L0 10" stroke="#7a1a1a" stroke-width="1.200"/></svg>
      <div class="flex h-[9px] w-[911px] shrink-0">
        <div class="flex-1 bg-[#000000]"></div><div class="flex-1 bg-[#1a1a1a]"></div><div class="flex-1 bg-[#333333]"></div><div class="flex-1 bg-[#4d4d4d]"></div><div class="flex-1 bg-[#666666]"></div><div class="flex-1 bg-[#808080]"></div><div class="flex-1 bg-[#999999]"></div><div class="flex-1 bg-[#b3b3b3]"></div><div class="flex-1 bg-[#cccccc]"></div><div class="flex-1 bg-[#e6e6e6]"></div><div class="flex-1 bg-[#ececec]"></div><div class="flex-1 bg-[#f2f2f2]"></div><div class="flex-1 bg-[#f9f9f9]"></div><div class="flex-1 bg-[#ffffff]"></div>
        <div class="flex-1 bg-[#800000]"></div><div class="flex-1 bg-[#ff0000]"></div><div class="flex-1 bg-[#808000]"></div><div class="flex-1 bg-[#ffff00]"></div><div class="flex-1 bg-[#008000]"></div><div class="flex-1 bg-[#00ff00]"></div><div class="flex-1 bg-[#008080]"></div><div class="flex-1 bg-[#00ffff]"></div><div class="flex-1 bg-[#000080]"></div><div class="flex-1 bg-[#0000ff]"></div><div class="flex-1 bg-[#800080]"></div><div class="flex-1 bg-[#ff00ff]"></div>
        <div class="flex-1 bg-[#2b0000]"></div><div class="flex-1 bg-[#550000]"></div><div class="flex-1 bg-[#800000]"></div><div class="flex-1 bg-[#aa0000]"></div><div class="flex-1 bg-[#d40000]"></div><div class="flex-1 bg-[#ff0000]"></div><div class="flex-1 bg-[#ff2a2a]"></div><div class="flex-1 bg-[#ff5555]"></div><div class="flex-1 bg-[#ff8080]"></div><div class="flex-1 bg-[#ffaaaa]"></div><div class="flex-1 bg-[#ffd5d5]"></div>
        <div class="flex-1 bg-[#280b0b]"></div><div class="flex-1 bg-[#501616]"></div><div class="flex-1 bg-[#782121]"></div><div class="flex-1 bg-[#a02c2c]"></div><div class="flex-1 bg-[#c83737]"></div><div class="flex-1 bg-[#d35f5f]"></div><div class="flex-1 bg-[#de8787]"></div><div class="flex-1 bg-[#e9afaf]"></div><div class="flex-1 bg-[#f4d7d7]"></div>
        <div class="flex-1 bg-[#241c1c]"></div><div class="flex-1 bg-[#483737]"></div><div class="flex-1 bg-[#6c5353]"></div><div class="flex-1 bg-[#916f6f]"></div><div class="flex-1 bg-[#ac9393]"></div><div class="flex-1 bg-[#c8b7b7]"></div><div class="flex-1 bg-[#e3dbdb]"></div>
        <div class="flex-1 bg-[#2b1100]"></div><div class="flex-1 bg-[#552200]"></div><div class="flex-1 bg-[#803300]"></div><div class="flex-1 bg-[#aa4400]"></div><div class="flex-1 bg-[#d45500]"></div><div class="flex-1 bg-[#ff6600]"></div><div class="flex-1 bg-[#ff7f2a]"></div><div class="flex-1 bg-[#ff9955]"></div><div class="flex-1 bg-[#ffb380]"></div><div class="flex-1 bg-[#ffccaa]"></div><div class="flex-1 bg-[#ffe6d5]"></div>
        <div class="flex-1 bg-[#28170b]"></div><div class="flex-1 bg-[#502d16]"></div>
      </div>
      <svg class="shrink-0 ml-[8px] -mb-[5px]" width="6" height="8" viewBox="0 0 6 8"><path d="M5 0L1 4l4 4z" fill="#444"/></svg>
    </div>
    <!-- palette scroll -->
    <div class="h-[9px] shrink-0">
      <div class="h-[3px] w-[143px] bg-[#ef926c] mt-[6px]"></div>
    </div>

    <!-- status -->
    <div class="h-[26px] shrink-0 flex items-center leading-[13px]">
      <div class="w-[59px] shrink-0 pl-[1px] grid grid-cols-[39px_19px] text-[#555] text-[11px] whitespace-nowrap">
        <span>Fill:</span><span>N/A</span><span>Stroke:</span><span>N/A</span>
      </div>
      <span class="ml-[2px] w-[13px] shrink-0 text-[#8e8e8e]">O:</span>
      <div class="flex h-[23px] w-[76px] shrink-0 rounded-[4px] border border-[#d8d6d2] bg-[#f0efee] text-[#a3a3a3] leading-[21px]">
        <div class="flex-1 pl-[5px] bg-[#f5f5f4] rounded-l-[4px]">100</div>
        <div class="w-[21px] border-l border-[#e0dedb] text-center text-[15px]">−</div>
        <div class="w-[22px] border-l border-[#e0dedb] text-center text-[15px]">+</div>
      </div>
      <svg class="ml-[10px] shrink-0" width="14" height="12" viewBox="0 0 14 12"><path d="M1 6q6-7 12 0-6 6-12 0z" fill="#fff" stroke="#222"/><circle cx="7" cy="6" r="3" fill="#111"/><path d="M3 1l1 2M7 0v2M11 1l-1 2" stroke="#222"/></svg>
      <svg class="ml-[10px] shrink-0" width="12" height="14" viewBox="0 0 14 16"><path d="M3 8V4a3 3 0 0 1 6 0" fill="none" stroke="#333" stroke-width="1.300"/><rect x="2.500" y="8" width="9" height="7" rx="1" fill="#f3e7a8" stroke="#333"/><rect x="6" y="10.500" width="2" height="2" fill="#555"/></svg>
      <div class="ml-[4px] h-[23px] w-[57px] shrink-0 rounded-[4px] border border-[#c9c6c1] bg-gradient-to-b from-[#fbfbfa] to-[#ecebe9] flex items-center pl-[5px] gap-[4px] text-[#333] whitespace-nowrap text-[10px]"><span>•Layer 1</span><span class="w-0 h-0 border-x-[4px] border-x-transparent border-t-[4px] border-t-[#222]"></span></div>
      <div class="ml-[12px] w-[402px] shrink-0 text-[#555] text-[10.65px] leading-[13px] whitespace-nowrap">No objects selected. Click, Shift+click, Alt+scroll mouse on top of objects, or drag<br>around objects to select.</div>
      <div class="w-px h-[26px] shrink-0 bg-[#e0dedb] ml-[3px]"></div>
      <div class="ml-[9px] shrink-0 grid grid-cols-[19px_32px] text-[#555]">
        <span>X:</span><span class="text-right">375.02</span><span>Y:</span><span class="text-right">114.14</span>
      </div>
      <span class="ml-[7px] w-[17px] shrink-0">Z:</span>
      <div class="flex h-[23px] w-[74px] shrink-0 rounded-[4px] border border-[#bab7b1] bg-[#eeedeb] leading-[21px]"><div class="flex-1 pl-[7px] bg-white rounded-l-[4px]">35%</div><div class="w-[15px] border-l border-[#dcdad7] text-center text-[15px] text-[#333]">−</div><div class="w-[18px] border-l border-[#dcdad7] text-center text-[15px] text-[#333]">+</div></div>
      <span class="ml-[9px] w-[17px] shrink-0">R:</span>
      <div class="flex h-[23px] w-[79px] shrink-0 rounded-[4px] border border-[#bab7b1] bg-[#eeedeb] leading-[21px]"><div class="flex-1 pl-[9px] bg-white rounded-l-[4px]">0.00°</div><div class="w-[15px] border-l border-[#dcdad7] text-center text-[15px] text-[#333]">−</div><div class="w-[17px] border-l border-[#dcdad7] text-center text-[15px] text-[#333]">+</div></div>
    </div>
  </div>
</div>
</body>
</html>
